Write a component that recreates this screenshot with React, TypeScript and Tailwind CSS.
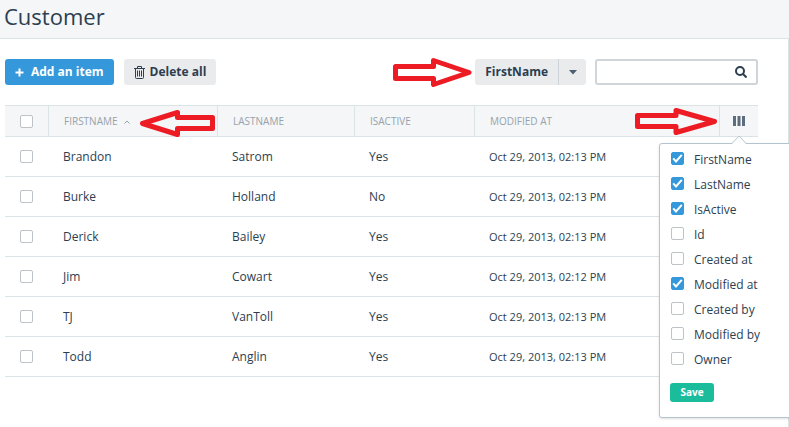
import { useState } from "react";
import clsx from "clsx";

interface Customer {
  firstName: string;
  lastName: string;
  isActive: boolean;
  modifiedAt: string;
}

interface CheckboxProps {
  id?: string;
  label?: string;
  checked?: boolean;
  onChange?: () => void;
}

interface ArrowProps {
  width: number;
  height: number;
  points: string;
  className?: string;
}

const customers: Customer[] = [
  { firstName: "Brandon", lastName: "Satrom", isActive: true, modifiedAt: "Oct 29, 2013, 02:13 PM" },
  { firstName: "Burke", lastName: "Holland", isActive: false, modifiedAt: "Oct 29, 2013, 02:13 PM" },
  { firstName: "Derick", lastName: "Bailey", isActive: true, modifiedAt: "Oct 29, 2013, 02:13 PM" },
  { firstName: "Jim", lastName: "Cowart", isActive: true, modifiedAt: "Oct 29, 2013, 02:12 PM" },
  { firstName: "TJ", lastName: "VanToll", isActive: true, modifiedAt: "Oct 29, 2013, 02:13 PM" },
  { firstName: "Todd", lastName: "Anglin", isActive: true, modifiedAt: "Oct 29, 2013, 02:13 PM" },
];

const fields = [
  "FirstName",
  "LastName",
  "IsActive",
  "Id",
  "Created at",
  "Modified at",
  "Created by",
  "Modified by",
  "Owner",
];

const Checkbox = ({ id, label, checked, onChange }: CheckboxProps) => (
  <span className="grid h-[13px] w-[13px] shrink-0">
    <input
      id={id}
      type="checkbox"
      aria-label={label}
      checked={checked}
      onChange={onChange}
      className="peer col-start-1 row-start-1 h-[13px] w-[13px] appearance-none rounded-[2px] border border-[#bdc3c7] bg-white checked:border-[#3498db] checked:bg-[#3498db]"
    />
    <svg
      viewBox="0 0 13 13"
      className="pointer-events-none invisible col-start-1 row-start-1 h-[13px] w-[13px] peer-checked:visible"
      fill="none"
      stroke="#fff"
      strokeWidth="2"
      aria-hidden="true"
    >
      <path d="M2.2 6.4 L5 9.4 L10.8 2.8" />
    </svg>
  </span>
);

const Arrow = ({ width, height, points, className }: ArrowProps) => (
  <svg
    width={width}
    height={height}
    viewBox={`0 0 ${width} ${height}`}
    className={clsx("pointer-events-none", className)}
    fill="none"
    stroke="#ed1c24"
    strokeWidth="5"
    strokeLinejoin="round"
    aria-hidden="true"
  >
    <polygon points={points} />
  </svg>
);

const TrashIcon = () => (
  <svg width="11" height="13" viewBox="0 0 11 13" fill="none" stroke="#2c3e50" aria-hidden="true">
    <path d="M0 2.5h11M3.5 2.5v-2h4v2M1.5 2.5v9q0 1 1 1h6q1 0 1-1v-9M3.5 4.5v6M5.5 4.5v6M7.5 4.5v6" />
  </svg>
);

const PlusIcon = () => (
  <svg width="9" height="9" viewBox="0 0 9 9" fill="none" stroke="#fff" strokeWidth="2" aria-hidden="true">
    <path d="M4.5 0.5v8M0.5 4.5h8" />
  </svg>
);

const ColumnsIcon = () => (
  <svg width="12" height="10" viewBox="0 0 12 10" fill="#5d6d7e" aria-hidden="true">
    <path d="M0 0h3v10H0zM4.5 0h3v10h-3zM9 0h3v10H9z" />
  </svg>
);

const headCell =
  "h-8 border-y border-r border-[#dae3e5] px-[15px] pt-[2px] text-left text-[10px] font-normal text-[#98a2ab]";
const bodyCell = "h-10 border-b border-[#dae3e5] px-[14px] pt-px";

const ColumnPicker = () => {
  const [visible, setVisible] = useState<string[]>(["FirstName", "LastName", "IsActive", "Modified at"]);

  const toggle = (field: string) => {
    setVisible((prev) => (prev.includes(field) ? prev.filter((f) => f !== field) : [...prev, field]));
  };

  return (
    <div className="absolute top-[37px] -left-[61px] z-10 w-40 rounded-[3px] border border-[#b4c5d0] bg-white px-[10px] pt-[3px] pb-[15px] shadow-sm">
      <svg width="16" height="9" viewBox="0 0 16 9" className="absolute -top-[9px] left-[71px]" aria-hidden="true">
        <path d="M0.5 9 L8 1 L15.5 9" fill="#fff" stroke="#b4c5d0" />
      </svg>
      {fields.map((field) => (
        <label key={field} htmlFor={field} className="flex h-[25px] items-center gap-[10px] pl-px text-xs">
          <span className="pb-[2px]">
            <Checkbox id={field} checked={visible.includes(field)} onChange={() => toggle(field)} />
          </span>
          {field}
        </label>
      ))}
      <button
        type="button"
        className="mt-[11px] block h-[19px] w-11 rounded-[3px] bg-[#1abc9c] text-[10px] font-bold text-white"
      >
        Save
      </button>
    </div>
  );
};

const App = () => {
  return (
    <div className="flex min-h-screen flex-col overflow-hidden bg-white font-['Open_Sans',sans-serif] text-[#2c3e50]">
      <header className="h-[39px] border-b border-[#dae3e5] bg-[#f4f6f8] pl-[4px]">
        <h1 className="text-[22px] leading-8">Customer</h1>
      </header>

      <main className="flex-1 border-r border-[#dae3e5] pt-5 pr-[30px] pl-[5px]">
        <div className="flex h-[26px] items-stretch gap-[10px] text-xs font-bold">
          <button type="button" className="flex items-center gap-[7px] rounded-[3px] bg-[#3498db] px-[10px] text-white">
            <PlusIcon />
            Add an item
          </button>
          <button type="button" className="flex items-center gap-[5px] rounded-[3px] bg-[#e9ebed] px-[10px]">
            <TrashIcon />
            Delete all
          </button>

          <div className="relative ml-auto flex">
            <Arrow
              width={79}
              height={29}
              points="2.5,8.5 40.5,8.5 40.5,2.5 76,14.5 40.5,26.5 40.5,20.5 2.5,20.5"
              className="absolute -top-px right-full mr-[3px]"
            />
            <button type="button" className="rounded-l-[3px] bg-[#e9ebed] px-[10px]">
              FirstName
            </button>
            <button
              type="button"
              aria-label="Choose field"
              className="flex w-7 items-center justify-center rounded-r-[3px] border-l border-[#cbd2d8] bg-[#e9ebed]"
            >
              <svg width="8" height="5" viewBox="0 0 8 5" fill="#4d5f70" aria-hidden="true">
                <path d="M0 0h8L4 4.5z" />
              </svg>
            </button>
          </div>

          <div className="-ml-px flex w-[163px] items-center rounded-[3px] border-2 border-[#cfd5d9] bg-white pr-[9px]">
            <input
              type="text"
              aria-label="Search"
              className="min-w-0 flex-1 px-2 font-normal outline-none"
            />
            <svg width="12" height="12" viewBox="0 0 12 12" fill="none" stroke="#2c3e50" strokeWidth="2" aria-hidden="true">
              <circle cx="5" cy="5" r="4" />
              <path d="M8 8l3.5 3.5" />
            </svg>
          </div>
        </div>

        <table className="mt-5 w-full table-fixed border-separate border-spacing-0 text-xs">
          <colgroup>
            <col className="w-11" />
            <col className="w-[169px]" />
            <col className="w-[137px]" />
            <col className="w-[120px]" />
            <col />
            <col className="w-[38px]" />
          </colgroup>
          <thead className="bg-[#f4f6f8]">
            <tr>
              <th className="h-8 border-y border-r border-[#dae3e5] pl-[15px]">
                <Checkbox label="Select all" />
              </th>
              <th className={clsx(headCell, "relative")}>
                <span className="flex items-center gap-[6px]">
                  FIRSTNAME
                  <svg width="6" height="4" viewBox="0 0 6 4" fill="none" stroke="#98a2ab" aria-hidden="true">
                    <path d="M0.5 3.5L3 1l2.5 2.5" />
                  </svg>
                </span>
                <Arrow
                  width={75}
                  height={27}
                  points="72.5,7.5 37.5,7.5 37.5,2.5 2.5,13.5 37.5,24.5 37.5,18.5 72.5,18.5"
                  className="absolute top-1 right-[2px]"
                />
              </th>
              <th className={headCell}>LASTNAME</th>
              <th className={headCell}>ISACTIVE</th>
              <th className={clsx(headCell, "relative")}>
                MODIFIED AT
                <Arrow
                  width={82}
                  height={27}
                  points="2.5,7.5 41,7.5 41,2.5 79.5,13.5 41,24.5 41,18.5 2.5,18.5"
                  className="absolute top-[2px] right-[2px]"
                />
              </th>
              <th className="relative h-8 border-y border-[#dae3e5] text-left font-normal">
                <button type="button" aria-label="Columns" className="flex w-full justify-center">
                  <ColumnsIcon />
                </button>
                <ColumnPicker />
              </th>
            </tr>
          </thead>
          <tbody>
            {customers.map((customer) => (
              <tr key={customer.firstName}>
                <td className="h-10 border-b border-[#dae3e5] pl-[15px]">
                  <Checkbox label={`Select ${customer.firstName}`} />
                </td>
                <td className={bodyCell}>{customer.firstName}</td>
                <td className={bodyCell}>{customer.lastName}</td>
                <td className={bodyCell}>{customer.isActive ? "Yes" : "No"}</td>
                <td className={clsx(bodyCell, "text-[11px]")}>{customer.modifiedAt}</td>
                <td className={bodyCell} />
              </tr>
            ))}
          </tbody>
        </table>
      </main>
    </div>
  );
};

export default App;
